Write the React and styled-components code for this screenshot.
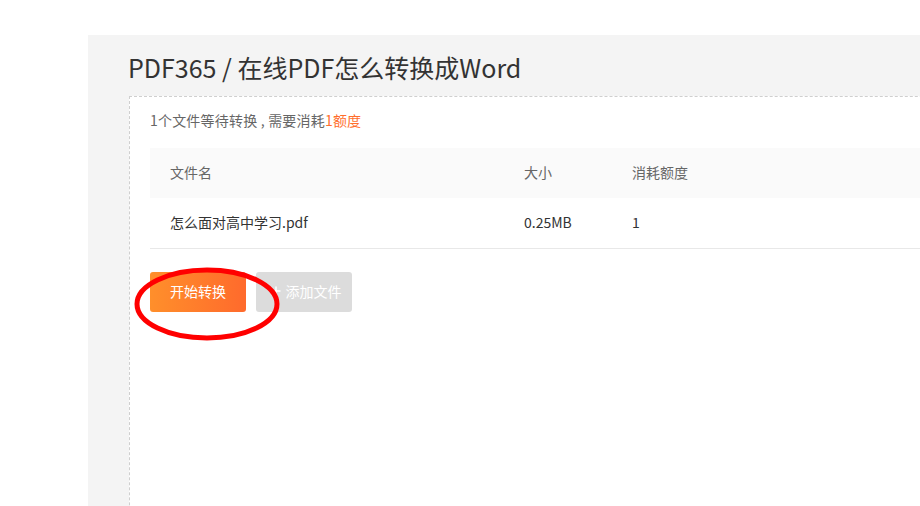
import React from "react";
import styled, { createGlobalStyle } from "styled-components";

const Global = createGlobalStyle`
  html, body { margin: 0; padding: 0; background: #fff; overflow: hidden; }
  body { font-family: "Noto Sans CJK SC", "Noto Sans", sans-serif; }
`;

const Page = styled.div`
  width: 920px;
  height: 506px;
  padding: 35px 0 0 88px;
  box-sizing: border-box;
  overflow: hidden;
`;

const Panel = styled.div`
  width: 1000px;
  height: 600px;
  background: #f4f4f4;
  padding: 12px 0 0 40px;
  box-sizing: border-box;
`;

const Title = styled.h1`
  margin: 0;
  font-size: 25px;
  line-height: 40px;
  font-weight: 400;
  color: #333;
`;

const Card = styled.div`
  margin-top: 9px;
  margin-left: 1px;
  height: 600px;
  background: #fff;
  border: 1px dashed #cfcfcf;
  padding: 13px 20px 0 20px;
  box-sizing: border-box;
`;

const Summary = styled.div`
  font-size: 14px;
  line-height: 20px;
  color: #666;
  letter-spacing: 0.2px;
`;

const Accent = styled.span`
  color: #ff6e2c;
`;

const Table = styled.div`
  margin-top: 18px;
  display: flex;
  flex-direction: column;
`;

const Row = styled.div`
  display: grid;
  grid-template-columns: 354px 108px 1fr;
  height: 50px;
  align-items: center;
  background: ${(p) => (p.$head ? "#fafafa" : "#fff")};
  border-bottom: ${(p) => (p.$head ? "none" : "1px solid #e8e8e8")};
  font-size: 14px;
  color: ${(p) => (p.$head ? "#666" : "#333")};
`;

const Cell = styled.div`
  padding: 0 0 3px 20px;
`;

const Actions = styled.div`
  position: relative;
  margin-top: 23px;
  display: flex;
  gap: 10px;
`;

const Button = styled.button`
  width: 96px;
  height: 40px;
  border: none;
  border-radius: 3px;
  font-family: inherit;
  font-size: 14px;
  color: #fff;
  display: flex;
  align-items: center;
  justify-content: center;
  gap: 5px;
  padding: ${(p) => (p.$primary ? "0 0 2px 0" : "0 0 2px 4px")};
  background: ${(p) =>
    p.$primary ? "linear-gradient(90deg, #ff8f2b, #ff6a2c)" : "#dcdcdc"};
`;

const PlusIcon = styled.svg`
  flex: none;
`;

const Mark = styled.svg`
  position: absolute;
  left: -17px;
  top: -6px;
  pointer-events: none;
`;

export default function App() {
  return (
    <>
      <Global />
      <Page>
        <Panel>
          <Title>PDF365 / 在线PDF怎么转换成Word</Title>
          <Card>
            <Summary>
              1个文件等待转换 , 需要消耗<Accent>1额度</Accent>
            </Summary>
            <Table>
              <Row $head>
                <Cell>文件名</Cell>
                <Cell>大小</Cell>
                <Cell>消耗额度</Cell>
              </Row>
              <Row>
                <Cell>怎么面对高中学习.pdf</Cell>
                <Cell>0.25MB</Cell>
                <Cell>1</Cell>
              </Row>
            </Table>
            <Actions>
              <Button $primary>开始转换</Button>
              <Button>
                <PlusIcon width="10" height="10" viewBox="0 0 10 10">
                  <path d="M5 0.5V9.5M0.5 5H9.5" stroke="#fff" strokeWidth="1.6" />
                </PlusIcon>
                添加文件
              </Button>
              <Mark width="148" height="76" viewBox="0 0 148 76">
                <ellipse cx="74" cy="38" rx="70" ry="34" fill="none" stroke="#ff0000" strokeWidth="5" />
              </Mark>
            </Actions>
          </Card>
        </Panel>
      </Page>
    </>
  );
}
